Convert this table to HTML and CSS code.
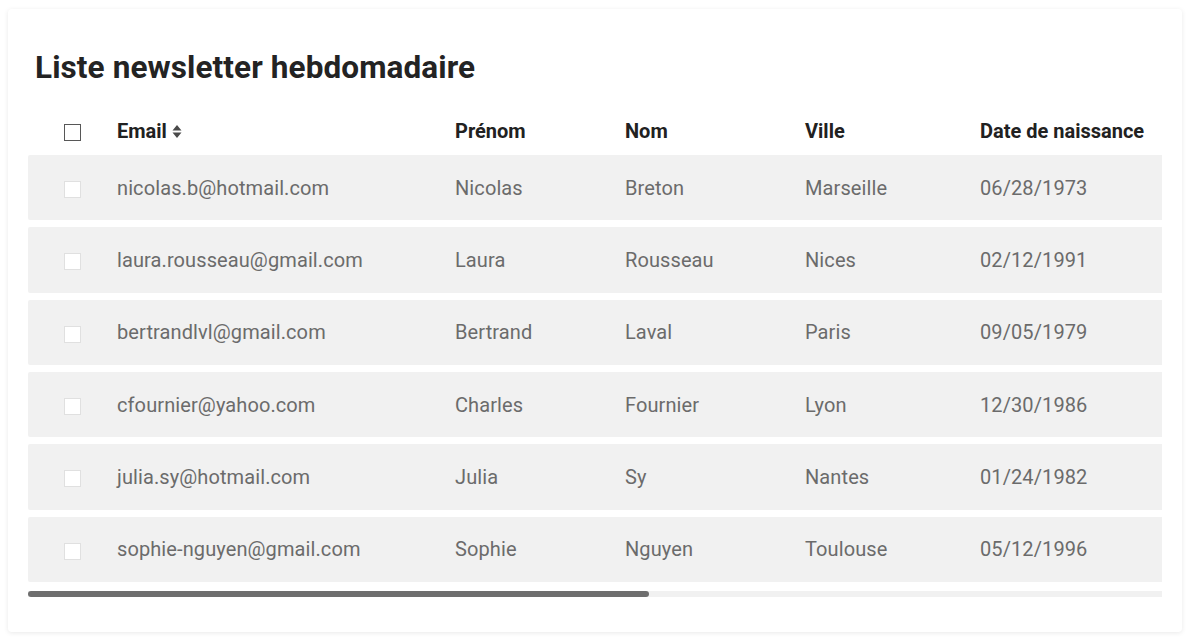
FILE: index.html
```html
<!DOCTYPE html>
<html lang="fr">
<head>
<meta charset="utf-8">
<title>Liste newsletter hebdomadaire</title>
<link rel="stylesheet" href="styles.css">
</head>
<body>
<section class="card">
  <h1 class="title">Liste newsletter hebdomadaire</h1>
  <div class="scroller">
    <table class="grid">
      <colgroup>
        <col class="c-check"><col class="c-email"><col class="c-first"><col class="c-last"><col class="c-city"><col class="c-date"><col class="c-rest">
      </colgroup>
      <thead>
        <tr>
          <th class="check-cell"><span class="box box-head"></span></th>
          <th><span class="sortable">Email <svg class="sort" width="10" height="15" viewBox="0 0 10 15"><path d="M5 1 L9.5 6.5 H0.5 Z M5 14 L9.5 8.5 H0.5 Z" fill="#4a4a4a"/></svg></span></th>
          <th>Prénom</th>
          <th>Nom</th>
          <th>Ville</th>
          <th>Date de naissance</th>
          <th></th>
        </tr>
      </thead>
      <tbody>
        <tr><td class="check-cell"><span class="box"></span></td><td>nicolas.b@hotmail.com</td><td>Nicolas</td><td>Breton</td><td>Marseille</td><td>06/28/1973</td><td></td></tr>
        <tr><td class="check-cell"><span class="box"></span></td><td>laura.rousseau@gmail.com</td><td>Laura</td><td>Rousseau</td><td>Nices</td><td>02/12/1991</td><td></td></tr>
        <tr><td class="check-cell"><span class="box"></span></td><td>bertrandlvl@gmail.com</td><td>Bertrand</td><td>Laval</td><td>Paris</td><td>09/05/1979</td><td></td></tr>
        <tr><td class="check-cell"><span class="box"></span></td><td>cfournier@yahoo.com</td><td>Charles</td><td>Fournier</td><td>Lyon</td><td>12/30/1986</td><td></td></tr>
        <tr><td class="check-cell"><span class="box"></span></td><td>julia.sy@hotmail.com</td><td>Julia</td><td>Sy</td><td>Nantes</td><td>01/24/1982</td><td></td></tr>
        <tr><td class="check-cell"><span class="box"></span></td><td>sophie-nguyen@gmail.com</td><td>Sophie</td><td>Nguyen</td><td>Toulouse</td><td>05/12/1996</td><td></td></tr>
      </tbody>
    </table>
  </div>
  <div class="hscroll" aria-hidden="true"><div class="hscroll-thumb" style="width: 54.8%"></div></div>
</section>
</body>
</html>
```
FILE: styles.css
```css
html, body {
  margin: 0;
  padding: 0;
  background: #ffffff;
}
body {
  padding: 9px 8px;
  font-family: Roboto, "Liberation Sans", sans-serif;
}
.card {
  background: #fff;
  border-radius: 4px;
  box-shadow: 0 1px 5px rgba(0, 0, 0, 0.09);
  padding: 29px 20px 35px;
}
.title {
  margin: 11px 0 0 7px;
  font-size: 31.5px;
  line-height: 38px;
  font-weight: 700;
  color: #232323;
  letter-spacing: 0.1px;
}
.scroller {
  overflow: hidden;
  margin-top: 20px;
}
.grid {
  width: 2070px;
  table-layout: fixed;
  border-collapse: separate;
  border-spacing: 0 7px;
}
.c-check { width: 89px; }
.c-email { width: 338px; }
.c-first { width: 170px; }
.c-last { width: 180px; }
.c-city { width: 175px; }
.c-date { width: 240px; }
.grid th {
  height: 34px;
  padding: 0;
  text-align: left;
  font-size: 20px;
  font-weight: 700;
  color: #212121;
  vertical-align: middle;
  white-space: nowrap;
}
.grid td {
  height: 65.33px;
  padding: 0;
  background: #f1f1f1;
  font-size: 20px;
  letter-spacing: 0.1px;
  color: #6b6b6b;
  vertical-align: middle;
  white-space: nowrap;
}
.grid td:first-child {
  border-radius: 2px 0 0 2px;
}
.grid .check-cell {
  text-align: center;
}
.box {
  display: inline-block;
  width: 17px;
  height: 17px;
  box-sizing: border-box;
  background: #fff;
  border: 1px solid #e0e0e0;
  vertical-align: middle;
}
.box-head {
  border: 1.5px solid #575757;
}
.sortable {
  display: inline-flex;
  align-items: center;
  gap: 5px;
}
.sort {
  display: block;
}
.hscroll {
  margin-top: 2px;
  height: 6px;
  background: #f1f1f1;
}
.hscroll-thumb {
  height: 100%;
  background: #6e6e6e;
  border-radius: 3px;
}
```
